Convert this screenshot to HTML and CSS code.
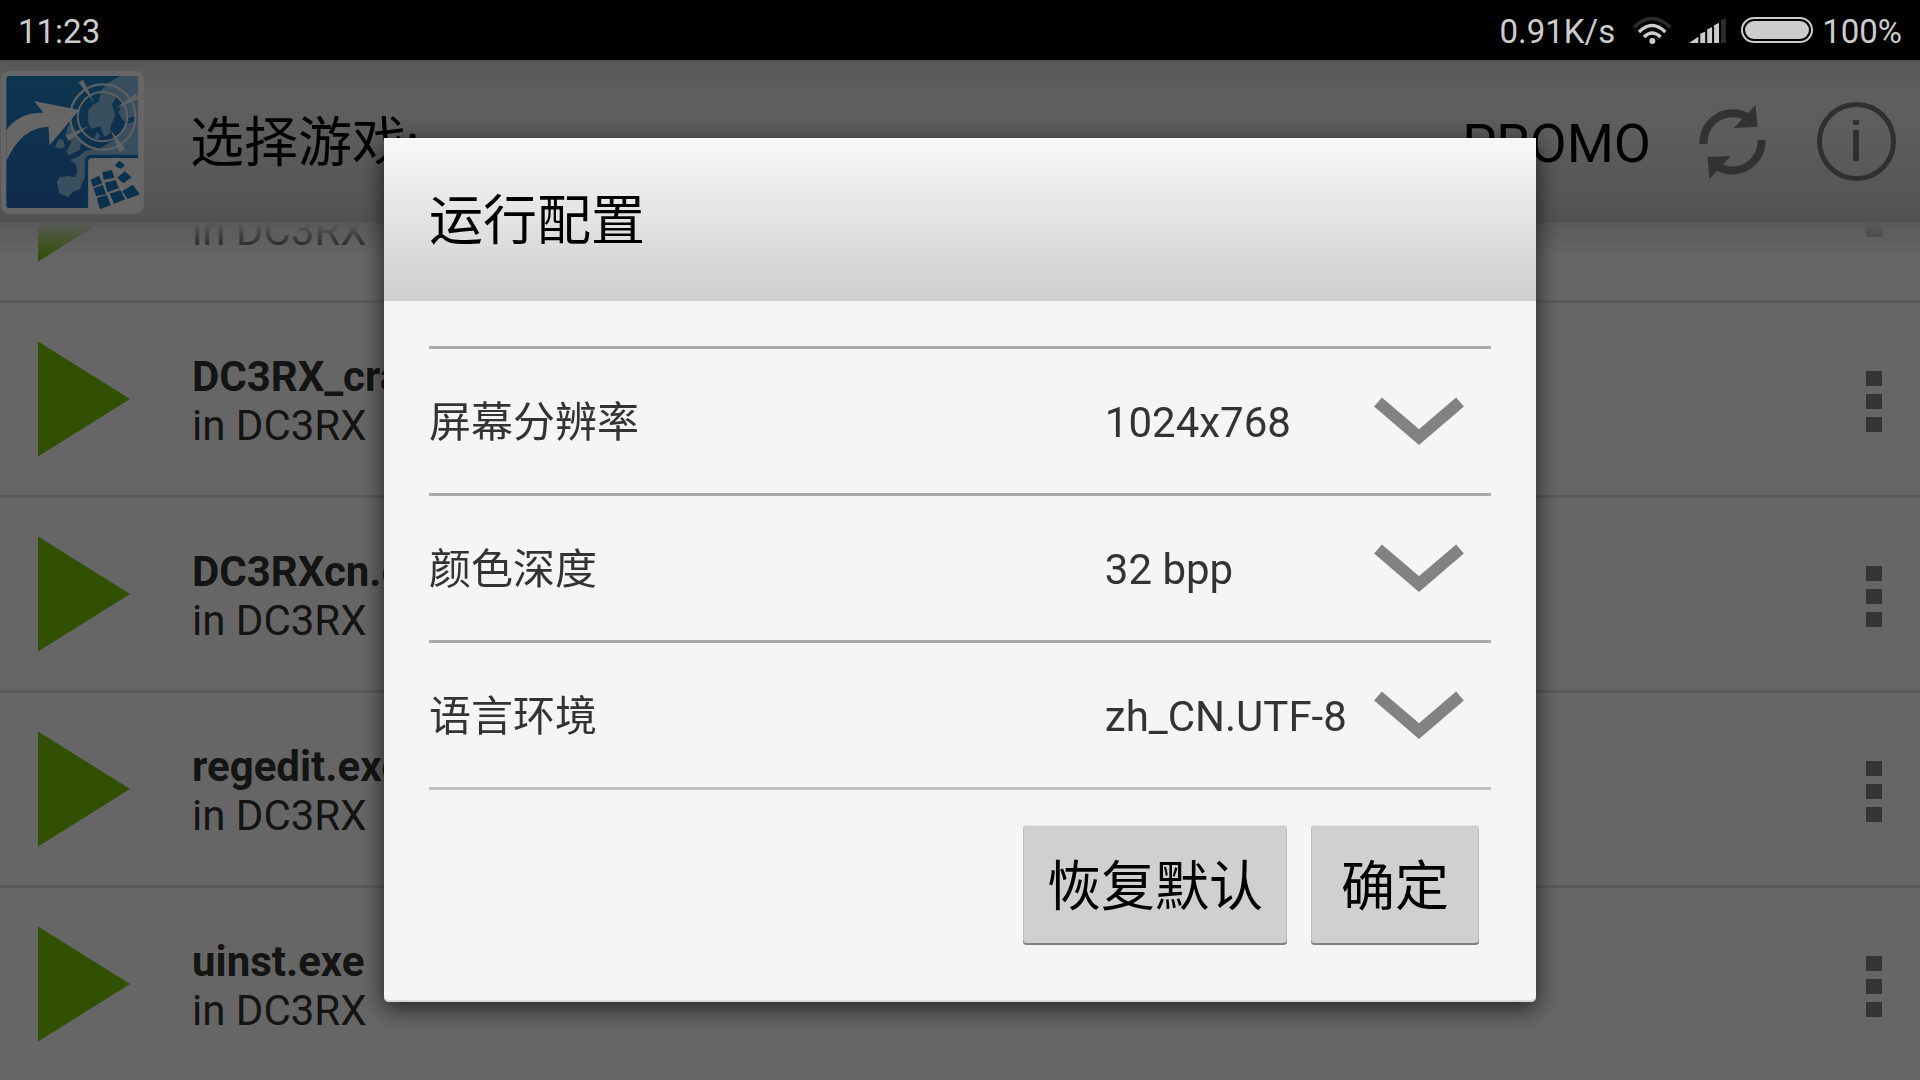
FILE: index.html
```html
<!DOCTYPE html>
<html lang="zh-CN">
<head>
    <meta charset="UTF-8">
    <meta name="viewport" content="width=device-width, initial-scale=1.0">
    <title>运行配置</title>
    <link rel="stylesheet" href="styles.css">
</head>
<body>
    <div class="status-bar">
        <span class="clock">11:23</span>
        <span class="speed">0.91K/s</span>
        <svg class="wifi" viewBox="584 45 114 87">
            <g fill="none" stroke="#ccc" stroke-width="10">
                <path stroke="#2c2c2c" d="M587 79Q641 26 696 79"/>
                <path d="M602 93Q641 54 681 93"/>
                <path d="M617 108Q641 84 667 108"/>
            </g>
            <circle cx="642" cy="120" r="9" fill="#ccc"/>
        </svg>
        <svg class="signal" viewBox="752 53 112 76" fill="#ccc">
            <path d="M752 129L780 110V129Z"/>
            <path d="M786 129V101L801 94V129Z"/>
            <path d="M807 129V88L822 80V129Z"/>
            <path d="M828 129V75L843 68V129Z"/>
            <path fill="#2c2c2c" d="M849 129V59L864 53V129Z"/>
        </svg>
        <span class="battery"></span>
        <span class="percent">100%</span>
    </div>

    <header class="action-bar">
        <svg class="app-icon" viewBox="3 27 428 432">
            <defs>
                <linearGradient id="sea" x1="0" y1="0" x2="0" y2="1">
                    <stop offset="0" stop-color="#2187c6"/>
                    <stop offset="1" stop-color="#286bbc"/>
                </linearGradient>
                <clipPath id="frame"><rect x="18" y="45" width="396" height="396" rx="10"/></clipPath>
            </defs>
            <rect x="3" y="29" width="428" height="430" rx="26" fill="#fff"/>
            <g clip-path="url(#frame)">
                <rect x="18" y="45" width="396" height="396" fill="url(#sea)"/>
                <g fill="#91c5ec">
                    <path d="M360 45H414V285H270Q255 292 254 310V350Q245 365 240 384L218 392L205 408L178 398L170 366L176 349L205 345L224 349L232 330L226 309L210 297L235 287L255 270L300 262L345 235L390 180H370L355 155L368 118L350 105L335 130L345 165L333 190L328 220L312 226L300 195L275 203L264 185V147L280 130L296 123L303 88L325 65Z"/>
                    <path d="M176 235L190 238L194 258L180 264L165 257Z"/>
                    <path d="M205 192L222 200L228 222L243 234L239 266L204 284L200 270L208 254L215 237L196 222Z"/>
                    <path d="M290 214L302 225L292 236L282 232Z"/>
                </g>
                <path fill="#2080c4" d="M384 172L402 166V181L388 186Z"/>
                <g fill="none" stroke="#e4f0f8">
                    <circle cx="308" cy="168" r="98" stroke-width="7"/>
                    <circle cx="307" cy="167" r="74" stroke-width="6"/>
                </g>
                <g fill="#f0f6fa">
                    <path d="M235 64L249 56L282 125Z"/>
                    <path d="M348 142L407 98L416 113Z"/>
                    <path d="M266 194L196 224L206 240Z"/>
                    <path d="M331 207L375 263L359 274Z"/>
                </g>
                <path fill="#fff" d="M18 207Q58 153 130 155L102 120L237 147L148 253L145 197Q62 199 18 302Z"/>
                <path fill="#1c7ac0" d="M254 441V302Q255 281 276 281H414V441Z"/>
            </g>
            <path fill="#fff" d="M264 444V304Q264 291 277 291H418V444Z"/>
            <g fill="#1c7ac0">
                <path d="M345 312L358 299L374 312L363 323L348 318Z"/>
                <path d="M306 334L335 327L343 350L311 357Z"/>
                <path d="M351 350L374 331L394 349L370 367Z"/>
                <path d="M271 356L297 344L306 367L278 378Z"/>
                <path d="M314 365L346 357L356 382L322 394Z"/>
                <path d="M280 382L308 372L318 400L288 406Z"/>
                <path d="M366 391L398 371L419 400L383 414Z"/>
                <path d="M328 398L361 388L375 415L342 429Z"/>
                <path d="M290 411L320 402L332 433L299 445Z"/>
            </g>
        </svg>
        <h1 class="bar-title">选择游戏:</h1>
        <button class="promo">PROMO</button>
        <button class="icon-btn" aria-label="刷新">
            <svg class="refresh" viewBox="776 312 200 222">
                <g fill="none" stroke="#7d7d7d" stroke-width="24">
                    <path d="M789 429A87 87 0 0 1 922 350"/>
                    <path d="M963 417A87 87 0 0 1 830 495"/>
                </g>
                <path fill="#7d7d7d" d="M945 312L951 377L880 381Z"/>
                <path fill="#7d7d7d" d="M807 534L801 468L871 465Z"/>
            </svg>
        </button>
        <button class="icon-btn" aria-label="关于">
            <svg class="info" viewBox="0 0 79 79">
                <circle cx="39.5" cy="39.5" r="37" fill="none" stroke="#787878" stroke-width="5"/>
                <path fill="#787878" d="M36 18H42V23H36ZM36 28H42V59H36Z"/>
            </svg>
        </button>
    </header>

    <main class="game-list">
        <ul class="games">
            <li class="game">
                <button class="play" aria-label="运行"></button>
                <div class="game-text"><b>DC3RX.exe</b><span>in DC3RX</span></div>
                <button class="more" aria-label="更多"><i></i><i></i><i></i></button>
            </li>
            <li class="game">
                <button class="play" aria-label="运行"></button>
                <div class="game-text"><b>DC3RX_crack.exe</b><span>in DC3RX</span></div>
                <button class="more" aria-label="更多"><i></i><i></i><i></i></button>
            </li>
            <li class="game">
                <button class="play" aria-label="运行"></button>
                <div class="game-text"><b>DC3RXcn.exe</b><span>in DC3RX</span></div>
                <button class="more" aria-label="更多"><i></i><i></i><i></i></button>
            </li>
            <li class="game">
                <button class="play" aria-label="运行"></button>
                <div class="game-text"><b>regedit.exe</b><span>in DC3RX</span></div>
                <button class="more" aria-label="更多"><i></i><i></i><i></i></button>
            </li>
            <li class="game">
                <button class="play" aria-label="运行"></button>
                <div class="game-text"><b>uinst.exe</b><span>in DC3RX</span></div>
                <button class="more" aria-label="更多"><i></i><i></i><i></i></button>
            </li>
        </ul>
    </main>

    <div class="overlay">
        <form class="dialog" role="dialog" aria-labelledby="dialog-title">
            <h2 class="dialog-title" id="dialog-title">运行配置</h2>
            <div class="options">
                <div class="option">
                    <label for="resolution">屏幕分辨率</label>
                    <select id="resolution">
                        <option>1024x768</option>
                    </select>
                    <svg class="chevron" viewBox="0 0 90 48"><path d="M4 5L45 40L86 5"/></svg>
                </div>
                <div class="option">
                    <label for="depth">颜色深度</label>
                    <select id="depth">
                        <option>32 bpp</option>
                    </select>
                    <svg class="chevron" viewBox="0 0 90 48"><path d="M4 5L45 40L86 5"/></svg>
                </div>
                <div class="option">
                    <label for="locale">语言环境</label>
                    <select id="locale">
                        <option>zh_CN.UTF-8</option>
                    </select>
                    <svg class="chevron" viewBox="0 0 90 48"><path d="M4 5L45 40L86 5"/></svg>
                </div>
            </div>
            <div class="actions">
                <button type="reset" class="btn">恢复默认</button>
                <button type="button" class="btn">确定</button>
            </div>
        </form>
    </div>
</body>
</html>
```
FILE: styles.css
```css
* {
    box-sizing: border-box;
}
body {
    font-family: Roboto, "Noto Sans CJK SC", sans-serif;
    margin: 0;
    height: 100vh;
    display: flex;
    flex-direction: column;
    overflow: hidden;
    background-color: #fff;
    color: #333;
}
button, select {
    font-family: inherit;
    color: inherit;
    background: none;
    border: none;
    padding: 0;
    cursor: pointer;
}
svg {
    display: block;
}

/* 状态栏 */
.status-bar {
    height: 60px;
    flex: none;
    display: flex;
    align-items: center;
    padding: 0 18px;
    background-color: #000;
    color: #ccc;
    font-size: 33px;
}
.clock, .speed, .percent {
    padding-top: 2px;
}
.speed {
    margin-left: auto;
}
.wifi {
    width: 38px;
    height: 29px;
    margin-left: 18px;
}
.signal {
    width: 37px;
    height: 25px;
    margin-left: 18px;
}
.battery {
    width: 72px;
    height: 26px;
    margin: 0 9px 0 15px;
    border: 2px solid #ccc;
    border-radius: 13px;
    padding: 2px;
    background: #ccc content-box;
}

/* 顶部操作栏 */
.action-bar {
    height: 163px;
    flex: none;
    display: flex;
    align-items: center;
    padding: 0 24px 0 1px;
    box-shadow: inset 0 3px 0 #cfcfcf;
    background: linear-gradient(#dcdcdc, #ededed 20%, #e8e8e8 45%, #cfcfcf);
    color: #000;
}
.app-icon {
    width: 143px;
    height: 144px;
}
.bar-title {
    flex: 1;
    margin: 0 0 0 46px;
    padding-bottom: 6px;
    font-size: 54px;
    font-weight: normal;
}
.promo {
    padding-top: 4px;
    font-size: 54px;
}
.icon-btn {
    margin-left: 51px;
}
.promo + .icon-btn {
    margin-left: 48px;
}
.refresh {
    width: 67px;
    height: 74px;
}
.info {
    width: 79px;
    height: 79px;
}

/* 游戏列表 */
.game-list {
    flex: 1;
    min-height: 0;
    overflow: hidden;
    position: relative;
}
.game-list::after {
    content: "";
    position: absolute;
    top: 0;
    left: 0;
    right: 0;
    height: 36px;
    background: linear-gradient(#e0e0e0, rgba(240, 240, 240, 0));
}
.games {
    list-style: none;
    margin: -115px 0 0;
    padding: 0;
}
.game {
    height: 195px;
    display: flex;
    align-items: center;
    padding: 0 38px;
    border-bottom: 3px solid #e1e1e1;
}
.play {
    width: 92px;
    height: 115px;
    background-color: #78c800;
    clip-path: polygon(0 0, 100% 50%, 0 100%);
}
.game-text {
    flex: 1;
    display: flex;
    flex-direction: column;
    margin-left: 62px;
    padding-top: 4px;
    font-size: 42px;
    line-height: 49px;
}
.more {
    display: flex;
    flex-direction: column;
    gap: 8px;
    padding-top: 4px;
}
.more i {
    width: 16px;
    height: 15px;
    background-color: #858585;
}

/* 对话框 */
.overlay {
    position: fixed;
    top: 60px;
    left: 0;
    right: 0;
    bottom: 0;
    display: flex;
    align-items: center;
    justify-content: center;
    background-color: rgba(0, 0, 0, 0.6);
}
.dialog {
    width: 60%;
    background-color: #f5f5f5;
    border-radius: 0 0 5px 5px;
    box-shadow: 0 6px 24px rgba(0, 0, 0, 0.7), inset 0 -2px 0 #d8d8d8;
}
.dialog-title {
    height: 163px;
    margin: 0;
    padding: 0 45px 6px;
    display: flex;
    align-items: center;
    background: linear-gradient(#f8f8f8, #cecece);
    color: #000;
    font-size: 54px;
    font-weight: normal;
}
.options {
    margin: 45px 45px 0;
    border-top: 3px solid #a9a9a9;
}
.option {
    display: grid;
    grid-template-columns: 7fr 4fr;
    align-items: center;
    height: 147px;
    border-bottom: 3px solid #a9a9a9;
    font-size: 42px;
}
.option:last-child {
    border-color: #c0c0c0;
}
.option label {
    padding-bottom: 6px;
}
.option select {
    grid-column: 2;
    grid-row: 1;
    height: 100%;
    padding-top: 2px;
    appearance: none;
    font-size: 42px;
}
.chevron {
    grid-column: 2;
    grid-row: 1;
    justify-self: end;
    width: 90px;
    height: 48px;
    margin-right: 27px;
    pointer-events: none;
}
.chevron path {
    fill: none;
    stroke: #828282;
    stroke-width: 12;
}
.actions {
    display: flex;
    justify-content: flex-end;
    gap: 24px;
    padding: 35px 57px 57px;
}
.btn {
    min-width: 168px;
    height: 120px;
    padding: 0 24px 6px;
    background-color: #d0d0d0;
    border-radius: 4px;
    box-shadow: inset 0 1px 0 #e2e2e2, inset 0 -2px 0 #808080, inset 0 0 0 1px #bcbcbc;
    color: #000;
    font-size: 54px;
}
```
